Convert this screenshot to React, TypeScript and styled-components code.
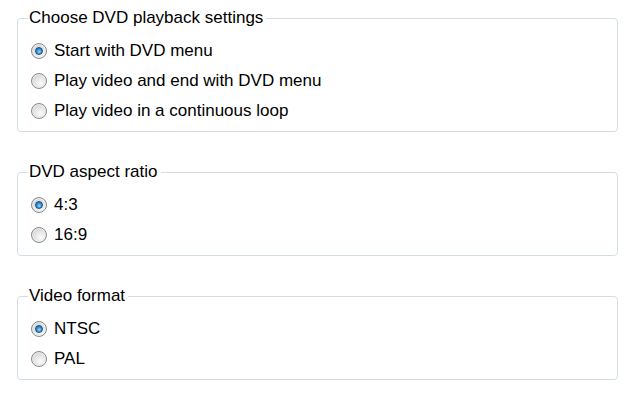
import React, { useState } from 'react';
import styled, { createGlobalStyle } from 'styled-components';

interface Group {
  name: string;
  title: string;
  options: string[];
}

const GROUPS: Group[] = [
  {
    name: 'playback',
    title: 'Choose DVD playback settings',
    options: ['Start with DVD menu', 'Play video and end with DVD menu', 'Play video in a continuous loop'],
  },
  { name: 'aspect', title: 'DVD aspect ratio', options: ['4:3', '16:9'] },
  { name: 'format', title: 'Video format', options: ['NTSC', 'PAL'] },
];

export default function App() {
  const [values, setValues] = useState<Record<string, number>>({
    playback: 0,
    aspect: 0,
    format: 0,
  });

  return (
    <>
      <GlobalStyle />
      <Page>
        {GROUPS.map((group) => (
          <Box key={group.name}>
            <Legend>{group.title}</Legend>
            <Options>
              {group.options.map((option, i) => (
                <Row key={option} onClick={() => setValues({ ...values, [group.name]: i })}>
                  <Radio $checked={values[group.name] === i} />
                  <span>{option}</span>
                </Row>
              ))}
            </Options>
          </Box>
        ))}
      </Page>
    </>
  );
}

const GlobalStyle = createGlobalStyle`
  html, body {
    margin: 0;
    background: #fff;
  }
`;

const Page = styled.div`
  width: 630px;
  height: 394px;
  box-sizing: border-box;
  padding: 8px 12px 0 17px;
  display: flex;
  flex-direction: column;
  gap: 30px;
  font-family: 'Liberation Sans', Arial, sans-serif;
  font-size: 17px;
  color: #000;
`;

const Box = styled.fieldset`
  margin: 0;
  padding: 0 10px 5px;
  min-width: 0;
  border: 1px solid #d3dde4;
  border-radius: 4px;
`;

const Legend = styled.legend`
  padding: 0 3px 0 1px;
  line-height: 20px;
`;

const Options = styled.div`
  display: flex;
  flex-direction: column;
  padding-top: 8px;
`;

const Row = styled.label`
  display: flex;
  align-items: center;
  gap: 7px;
  height: 30px;
  padding-left: 3px;
  cursor: default;
`;

const Radio = styled.span<{ $checked: boolean }>`
  position: relative;
  flex: none;
  width: 16px;
  height: 16px;
  box-sizing: border-box;
  border-radius: 50%;
  border: 1px solid #878a8d;
  background: radial-gradient(circle at 62% 66%, #fafafa 0%, #e8e8e8 40%, #c4c4c4 100%);
  box-shadow: inset 0 0 0 1px #f0f0f0;

  &::after {
    content: '';
    display: ${(p) => (p.$checked ? 'block' : 'none')};
    position: absolute;
    left: 3px;
    top: 3px;
    width: 8px;
    height: 8px;
    box-sizing: border-box;
    border-radius: 50%;
    border: 1px solid #1a4c78;
    background: radial-gradient(circle at 55% 62%, #9ad8f8 0%, #3596d6 45%, #16609a 100%);
  }
`;
